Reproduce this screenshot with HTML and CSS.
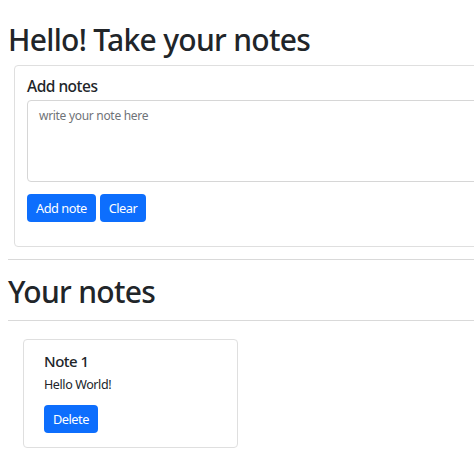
FILE: index.html
```html
<!DOCTYPE html>
<html lang="en">
<head>
    <meta charset="UTF-8">
    <title>Notes</title>
    <link rel="stylesheet" href="styles.css">
</head>
<body>
    <div class="page">
        <h1 class="title">Hello! Take your notes</h1>
        <div class="card add-card">
            <div class="card-body">
                <h5 class="label">Add notes</h5>
                <textarea class="note-input" placeholder="write your note here"></textarea>
                <div class="actions">
                    <button class="btn">Add note</button>
                    <button class="btn">Clear</button>
                </div>
            </div>
        </div>
        <hr class="rule first">
        <h1 class="title notes-title">Your notes</h1>
        <hr class="rule second">
        <div class="notes">
            <div class="card note-card">
                <h5 class="note-title">Note 1</h5>
                <p class="note-text">Hello World!</p>
                <button class="btn">Delete</button>
            </div>
        </div>
    </div>
</body>
</html>
```

FILE: styles.css
```css
html, body {
    overflow: hidden;
}

body {
    margin: 0;
    font-family: "Noto Sans", "Open Sans", sans-serif;
    color: #212529;
    background: #fff;
}

.page {
    width: 560px;
    padding: 0 8px;
}

.title {
    margin: 22px 0 0;
    font-size: 30px;
    line-height: 36px;
    font-weight: 500;
    letter-spacing: -0.7px;
}

.card {
    border: 1px solid #dfdfdf;
    border-radius: 4px;
    background: #fff;
}

.add-card {
    margin: 7px 0 0 6px;
}

.card-body {
    padding: 9px 12px 24px;
}

.label {
    margin: 0 0 3px;
    font-size: 15.5px;
    line-height: 22px;
    font-weight: 500;
    letter-spacing: -0.5px;
}

.note-input {
    display: block;
    box-sizing: border-box;
    width: 100%;
    height: 82px;
    padding: 6px 11px;
    border: 1px solid #d6d6d6;
    border-radius: 4px;
    font-family: inherit;
    font-size: 12px;
    letter-spacing: -0.3px;
    resize: none;
}

.note-input::placeholder {
    color: #6f7378;
}

.actions {
    display: flex;
    gap: 4px;
    margin-top: 12px;
}

.btn {
    height: 28px;
    padding: 0 9px;
    border: none;
    border-radius: 4px;
    background-color: #0d6efd;
    color: #fff;
    font-family: inherit;
    font-size: 12.8px;
    letter-spacing: -0.5px;
    cursor: pointer;
}

.rule {
    border: none;
    border-top: 1px solid #d9d9d9;
    margin: 0;
}

.rule.first {
    margin-top: 12px;
}

.notes-title {
    margin-top: 14px;
}

.rule.second {
    margin-top: 10px;
}

.notes {
    display: flex;
    padding: 18px 0 0 15px;
}

.note-card {
    box-sizing: border-box;
    width: 215px;
    padding: 11px 20px 14px;
}

.note-title {
    margin: 0 0 3px;
    font-size: 15px;
    line-height: 21px;
    font-weight: 500;
    letter-spacing: -0.5px;
}

.note-text {
    margin: 0 0 11px;
    font-size: 12.5px;
    line-height: 19px;
    letter-spacing: -0.4px;
}
```
